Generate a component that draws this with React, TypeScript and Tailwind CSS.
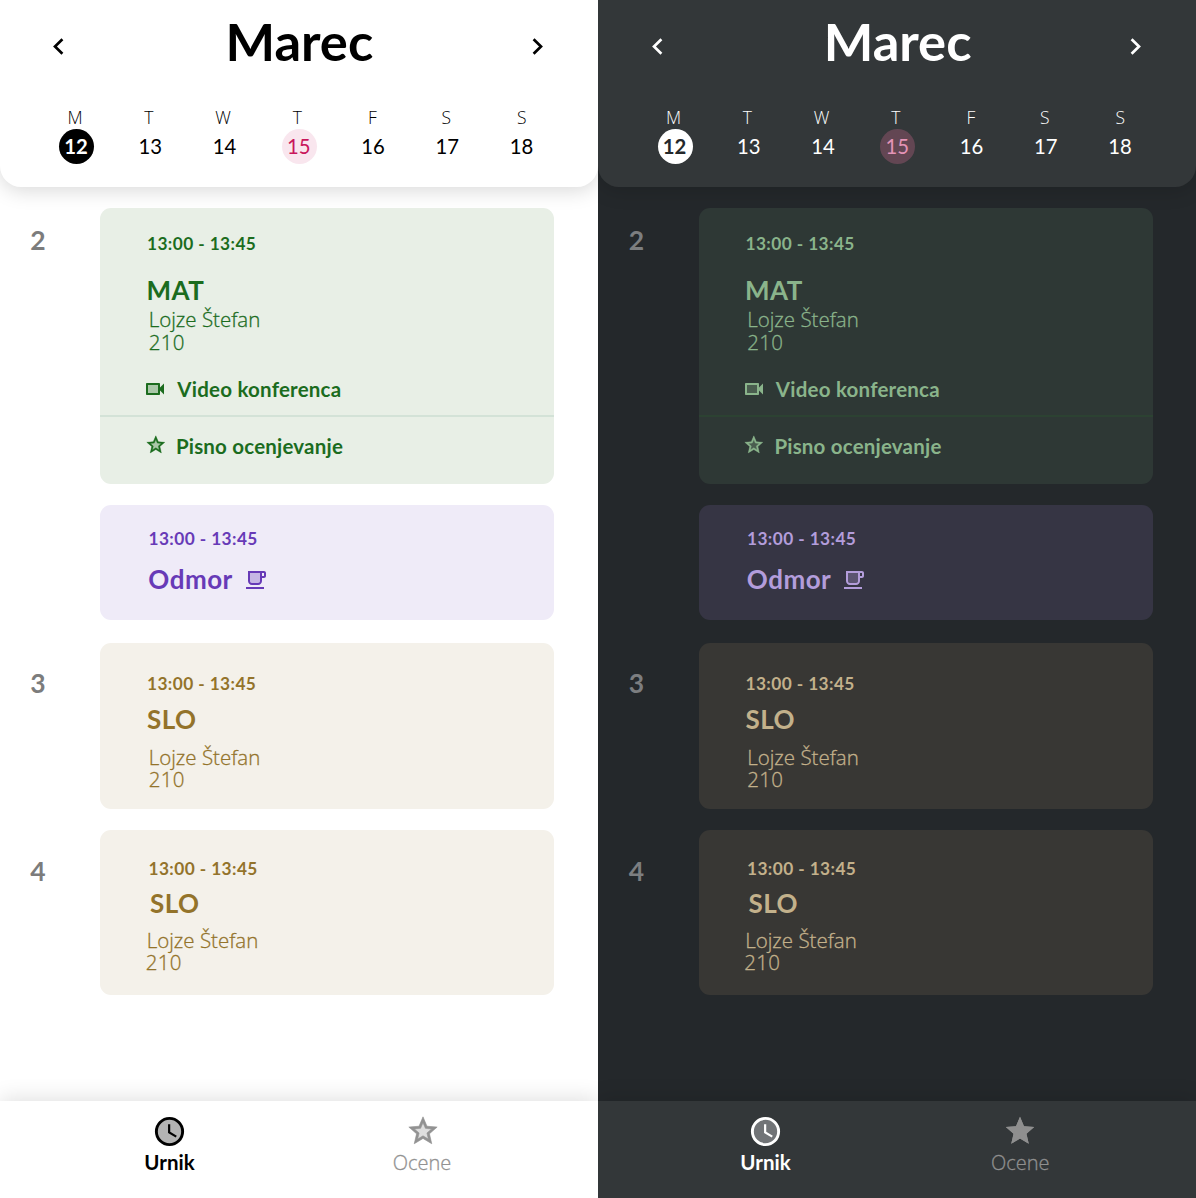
import type { ReactNode } from "react";

type Theme = {
  page: string;
  surface: string;
  text: string;
  selected: string;
  exam: string;
  hour: string;
  green: string;
  divider: string;
  purple: string;
  brown: string;
  headerShadow: string;
  navShadow: string;
  muted: string;
  indent: string;
  navLeft: string;
  navGap: string;
  starShift: string;
  filledStar: boolean;
  clockFill: string;
};

const light: Theme = {
  page: "bg-white",
  surface: "bg-white",
  text: "text-black",
  selected: "bg-black text-white",
  exam: "bg-[#f9e6ee] text-[#c9175c]",
  hour: "text-[#7c7c7c]",
  green: "bg-[#e8efe6] text-[#1b6c1e]",
  divider: "bg-[#d3e2d7]",
  purple: "bg-[#efebf8] text-[#673ab7]",
  brown: "bg-[#f4f1ea] text-[#93732a]",
  headerShadow: "shadow-[0_4px_20px_rgba(0,0,0,0.15)]",
  navShadow: "shadow-[0_-3px_20px_rgba(0,0,0,0.12)]",
  muted: "text-[#929292]",
  indent: "",
  navLeft: "ml-[109px]",
  navGap: "ml-[130.5px]",
  starShift: "ml-[2px]",
  filledStar: false,
  clockFill: "#b3b3b3",
};

const dark: Theme = {
  page: "bg-[#24282b]",
  surface: "bg-[#333739]",
  text: "text-white",
  selected: "bg-white text-[#24282b]",
  exam: "bg-[#634653] text-[#e493b6]",
  hour: "text-[#7c7e80]",
  green: "bg-[#2e3835] text-[#8ab48b]",
  divider: "bg-[#2c4232]",
  purple: "bg-[#363544] text-[#b39ddb]",
  brown: "bg-[#383734] text-[#c3b18b]",
  headerShadow: "shadow-[0_4px_20px_rgba(0,0,0,0.15)]",
  navShadow: "shadow-[0_-3px_20px_rgba(0,0,0,0.12)]",
  muted: "text-[#8f8f8f]",
  indent: "pl-[0.5px]",
  navLeft: "ml-[107px]",
  navGap: "ml-[132.8px]",
  starShift: "",
  filledStar: true,
  clockFill: "#717477",
};

const bold = "font-['Lato',sans-serif] font-bold whitespace-nowrap";
const thin = "font-['Open_Sans',sans-serif] font-light whitespace-nowrap";
const thickened = "[-webkit-text-stroke:0.3px_currentColor]";

const days = [
  { name: "M", num: "12", shift: "pr-[3px]" },
  { name: "T", num: "13", shift: "pr-[4px]" },
  { name: "W", num: "14", shift: "pr-[4px]" },
  { name: "T", num: "15", shift: "pr-[4px]" },
  { name: "F", num: "16", shift: "pr-[2px]" },
  { name: "S", num: "17", shift: "pr-[3px]" },
  { name: "S", num: "18", shift: "pr-0" },
];

const Chevron = ({ flip = false }: { flip?: boolean }) => (
  <svg viewBox="0 0 11 17" className={`h-[17px] w-[11px] ${flip ? "-scale-x-100" : ""}`}>
    <path d="M9.4 1.2 2 8.5 9.4 15.8" fill="none" stroke="currentColor" strokeWidth="2.7" />
  </svg>
);

const STAR_RING =
  "M22 9.24l-7.19-.62L12 2 9.19 8.63 2 9.24l5.46 4.73L5.82 21 12 17.27 18.18 21l-1.63-7.03L22 9.24zM12 15.4l-3.76 2.27 1-4.28-3.32-2.88 4.38-.38L12 6.1l1.71 4.04 4.38.38-3.32 2.88 1 4.28L12 15.4z";

const Star = ({ className, filled = false }: { className: string; filled?: boolean }) => (
  <svg viewBox="0 0 24 24" className={`shrink-0 ${className}`} fill="currentColor">
    <path
      opacity={filled ? 1 : 0.3}
      d="M12 17.27 18.18 21l-1.63-7.03L22 9.24l-7.19-.62L12 2 9.19 8.63 2 9.24l5.46 4.73L5.82 21z"
    />
    <path d={STAR_RING} stroke="currentColor" strokeWidth={filled ? 0 : 0.4} />
  </svg>
);

const Camera = () => (
  <svg viewBox="0 0 24 24" className="size-6 shrink-0" fill="currentColor">
    <path opacity=".3" d="M5 8h10v8H5z" />
    <path d="M15 8v8H5V8h10m1-2H4c-.55 0-1 .45-1 1v10c0 .55.45 1 1 1h12c.55 0 1-.45 1-1v-3.5l4 4v-11l-4 4V7c0-.55-.45-1-1-1z" />
  </svg>
);

const Cup = () => (
  <svg viewBox="0 0 24 24" className="mt-[3px] size-6 shrink-0" fill="currentColor">
    <path opacity=".3" d="M6 13c0 1.1.9 2 2 2h6c1.1 0 2-.9 2-2V5H6v8z" />
    <path d="M16 5v8c0 1.1-.9 2-2 2H8c-1.1 0-2-.9-2-2V5h10m4-2H4v10c0 2.21 1.79 4 4 4h6c2.21 0 4-1.79 4-4v-3h2c1.11 0 2-.89 2-2V5c0-1.11-.89-2-2-2zm0 5h-2V5h2v3zM2 19h18v2H2z" />
  </svg>
);

const Clock = ({ fill }: { fill: string }) => (
  <svg viewBox="0 0 24 24" className="size-[35px]">
    <circle cx="12" cy="12" r="9" fill={fill} stroke="currentColor" strokeWidth="2" />
    <path fill="currentColor" d="M12.5 7H11v6l5.25 3.15.75-1.23-4.5-2.67z" />
  </svg>
);

const Row = ({ className, hour, hourClass, children }: { className: string; hour?: string; hourClass: string; children: ReactNode }) => (
  <div className={`flex ${className}`}>
    <div className={`w-[100px] shrink-0 pl-[30.2px] text-[26.5px] leading-[30px] ${bold} ${hourClass}`}>{hour}</div>
    {children}
  </div>
);

const card = "w-[454.3px] shrink-0 rounded-[11px]";

const Time = ({ className }: { className: string }) => (
  <div className={`text-[17.3px] leading-5 tracking-[0.41px] ${bold} ${className}`}>13:00 - 13:45</div>
);

const Title = ({ className, children }: { className: string; children: ReactNode }) => (
  <div className={`text-[26px] leading-[30px] tracking-[0.5px] ${bold} ${className}`}>{children}</div>
);

const Teacher = ({ className, roomClass }: { className: string; roomClass: string }) => (
  <div className={`text-[20.5px] ${thin} ${thickened} ${className}`}>
    <div>Lojze Štefan</div>
    <div className={`tracking-[0.3px] ${roomClass}`}>210</div>
  </div>
);

function Phone({ t }: { t: Theme }) {
  return (
    <section className={`flex h-[1198px] w-[598px] flex-col overflow-hidden ${t.page}`}>
      <header className={`h-[187.3px] shrink-0 rounded-b-[21px] ${t.surface} ${t.text} ${t.headerShadow} ${t.indent}`}>
        <div className="flex items-start justify-between pt-[11px] pr-[54.5px] pl-[53.2px]">
          <div className="pt-[26.5px]">
            <Chevron />
          </div>
          <h1 className={`pl-[2px] text-[52.5px] leading-[60px] ${bold}`}>Marec</h1>
          <div className="pt-[26.5px]">
            <Chevron flip />
          </div>
        </div>
        <div className="ml-[39.5px] grid w-[519.5px] grid-cols-7 pt-9 text-center">
          {days.map((d) => (
            <div key={d.num} className="flex flex-col items-center">
              <div className={`text-[17.5px] leading-5 ${thin} ${d.shift}`}>{d.name}</div>
              <div
                className={`mt-[2px] size-[35px] rounded-full font-['Lato',sans-serif] text-[20.3px] leading-[35px] ${
                  d.num === "12" ? `pr-px font-bold ${t.selected}` : d.num === "15" ? `pr-px ${t.exam}` : "pr-px"
                }`}
              >
                {d.num}
              </div>
            </div>
          ))}
        </div>
      </header>

      <main className={`flex grow flex-col pt-[20.7px] ${t.indent}`}>
        <Row className="h-[276.5px]" hour="2" hourClass={`pt-[17px] ${t.hour}`}>
          <article className={`${card} ${t.green}`}>
            <Time className="pt-[26px] pl-[47px]" />
            <Title className="pt-[21px] pl-[46.5px]">MAT</Title>
            <Teacher className="pt-[3.5px] pl-[48.7px] leading-[23px]" roomClass="" />
            <div className="flex items-center pt-[22.5px] pl-[43.3px]">
              <Camera />
              <span className={`pl-[10px] text-[20.5px] leading-6 tracking-[0.22px] ${bold}`}>Video konferenca</span>
            </div>
            <div className={`mt-[14.5px] h-[1.5px] ${t.divider}`} />
            <div className="flex items-center pt-[17.5px] pl-[44.6px]">
              <Star className="-mt-[3px] size-[21.6px]" />
              <span className={`pl-[9.7px] text-[20.5px] leading-6 tracking-[0.2px] ${bold}`}>Pisno ocenjevanje</span>
            </div>
          </article>
        </Row>

        <Row className="mt-[20.5px] h-[115px]" hourClass="">
          <article className={`${card} ${t.purple}`}>
            <Time className="pt-[23.7px] pl-[48.5px]" />
            <div className="flex items-center pt-[15px] pl-[48.3px]">
              <Title className="">Odmor</Title>
              <div className="pl-[11px]">
                <Cup />
              </div>
            </div>
          </article>
        </Row>

        <Row className="mt-[23.5px] h-[165.5px]" hour="3" hourClass={`pt-[24.5px] ${t.hour}`}>
          <article className={`${card} ${t.brown}`}>
            <Time className="pt-[31px] pl-[47px]" />
            <Title className="pt-[10px] pl-[47px]">SLO</Title>
            <Teacher className="pt-[11.5px] pl-[48.7px] leading-[22.5px]" roomClass="" />
          </article>
        </Row>

        <Row className="mt-[21px] h-[165.5px]" hour="4" hourClass={`pt-[26px] ${t.hour}`}>
          <article className={`${card} ${t.brown}`}>
            <Time className="pt-[29px] pl-[48.5px]" />
            <Title className="pt-[9px] pl-[50px]">SLO</Title>
            <Teacher className="pt-[11px] pl-[46.7px] leading-[22px]" roomClass="-ml-px" />
          </article>
        </Row>
      </main>

      <nav className={`flex h-[97px] shrink-0 ${t.surface} ${t.navShadow}`}>
        <div className={`flex w-[121px] flex-col items-center pt-[13px] ${t.navLeft} ${t.text}`}>
          <Clock fill={t.clockFill} />
          <span className={`mt-px text-[20.5px] leading-6 ${bold}`}>Urnik</span>
        </div>
        <div className={`flex w-[123px] flex-col items-center pt-[13px] ${t.navGap} ${t.muted}`}>
          <Star className={`size-[34px] ${t.starShift}`} filled={t.filledStar} />
          <span className={`mt-[3px] text-[20px] leading-6 ${thin} ${thickened}`}>Ocene</span>
        </div>
      </nav>
    </section>
  );
}

export default function App() {
  return (
    <div className="flex w-[1196px]">
      <Phone t={light} />
      <Phone t={dark} />
    </div>
  );
}
